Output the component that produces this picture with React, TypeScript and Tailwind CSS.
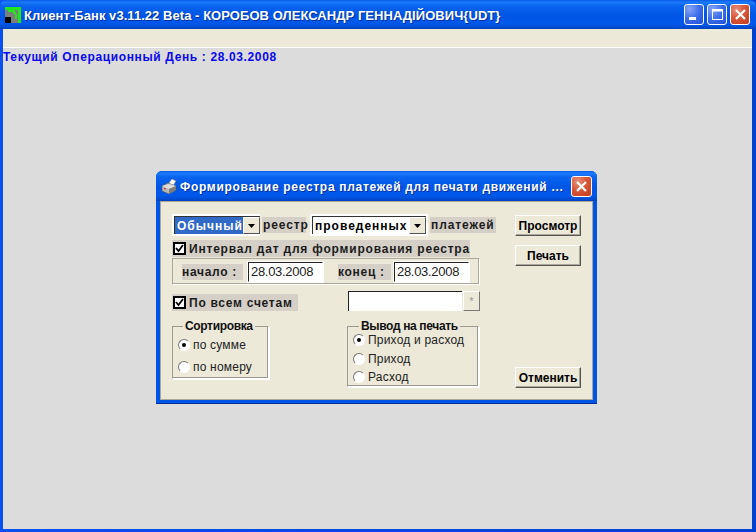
const TITLE = "bg-[linear-gradient(180deg,#0a5ce8_0%,#1a7af8_8%,#0a64ee_20%,#0055e5_55%,#0058ea_80%,#0050d8_92%,#0040b8_100%)]";
const FONT = { fontFamily: '"Liberation Sans", Arial, sans-serif' };

function Control({ kind, size = 21 }: { kind: "min" | "max" | "close"; size?: number }) {
  const bg =
    kind === "close"
      ? "bg-[radial-gradient(circle_at_30%_25%,#e8907a_0%,#d8573a_45%,#c23a1c_100%)]"
      : "bg-[radial-gradient(circle_at_25%_20%,#86a4f5_0%,#3d6de8_50%,#2050d8_100%)]";
  return (
    <div className={`${bg} flex items-center justify-center rounded-[3px] border border-white`} style={{ width: size, height: 21 }}>
      <svg width="13" height="13" viewBox="0 0 13 13">
        {kind === "min" && <rect x="1" y="9" width="7" height="3" fill="#fff" />}
        {kind === "max" && (
          <g fill="none" stroke="#fff">
            <rect x="1.5" y="1.5" width="10" height="10" />
            <rect x="1" y="1" width="11" height="2.5" fill="#fff" stroke="none" />
          </g>
        )}
        {kind === "close" && <path d="M2 2 L11 11 M11 2 L2 11" stroke="#fff" strokeWidth="2.2" />}
      </svg>
    </div>
  );
}

function AppIcon() {
  return (
    <svg width="16" height="16" viewBox="0 0 16 16" shapeRendering="crispEdges">
      <rect width="16" height="16" fill="#22e61e" />
      <rect x="0" y="3" width="13" height="13" fill="#7d7d7d" />
      <rect x="3" y="3" width="7" height="2" fill="#22e61e" />
      <rect x="8" y="5" width="3" height="2" fill="#22e61e" />
      <rect x="10" y="7" width="2" height="5" fill="#22e61e" />
      <rect x="0" y="10" width="6" height="6" fill="#000" />
      <rect x="13" y="3" width="3" height="13" fill="#22e61e" />
    </svg>
  );
}

function PrinterIcon() {
  return (
    <svg width="17" height="17" viewBox="0 0 17 17">
      <path d="M7 6 L11 1 L15 3 L12 8 Z" fill="#fff" stroke="#888" strokeWidth="0.6" />
      <path d="M1 8 L7 5 L15 8 L15 12 L8 16 L1 13 Z" fill="#b8b8b8" stroke="#555" strokeWidth="0.6" />
      <path d="M1 8 L8 11 L15 8 L8 6 Z" fill="#dcdcdc" />
      <path d="M8 11 L8 16 L15 12 L15 8 Z" fill="#7c7c7c" />
      <rect x="3" y="10" width="1.6" height="1.4" fill="#d03030" />
    </svg>
  );
}

function Combo({ width, text, selected }: { width: number; text: string; selected?: boolean }) {
  return (
    <div className="flex h-[22px] shrink-0 items-center border-2 border-white bg-white" style={{ width }}>
      <div className="flex h-[18px] flex-1 items-center border-t border-l border-t-[#333] border-l-[#333] bg-white">
        <span
          className={`${selected ? "bg-[#3169c6] text-white" : "text-black"} flex h-[17px] flex-1 items-center pl-[2px] text-[12px] leading-none font-bold tracking-[1px] whitespace-nowrap`}
        >
          {text}
        </span>
        <div className="flex h-[17px] w-[17px] shrink-0 items-center justify-center border border-t-white border-r-[#555] border-b-[#555] border-l-white bg-[#ece9d8]">
          <svg width="7" height="4" viewBox="0 0 7 4">
            <path d="M0 0 H7 L3.5 4 Z" fill="#000" />
          </svg>
        </div>
      </div>
    </div>
  );
}

function Label({ children, className = "" }: { children: React.ReactNode; className?: string }) {
  return (
    <div className={`flex h-[16px] shrink-0 items-center bg-[#d4d0c8] text-[12px] leading-none font-bold tracking-[0.7px] whitespace-nowrap text-[#1c1c1c] ${className}`}>
      {children}
    </div>
  );
}

function Check() {
  return (
    <div className="flex h-[13px] w-[13px] shrink-0 items-center justify-center border-2 border-black bg-white">
      <svg width="9" height="9" viewBox="0 0 9 9">
        <path d="M1 4 L3.5 7 L8 1" fill="none" stroke="#000" strokeWidth="1.8" />
      </svg>
    </div>
  );
}

function DateInput({ value }: { value: string }) {
  return (
    <div className="flex h-[20px] w-[75px] items-center border-t border-l border-t-[#222] border-r border-b border-r-white border-b-white border-l-[#222] bg-white pl-[2px] text-[13px] font-light tracking-[-0.3px] text-[#222] outline outline-white">
      {value}
    </div>
  );
}

function Radio({ on, label, className = "" }: { on?: boolean; label: string; className?: string }) {
  return (
    <div className={`flex items-center gap-[3px] text-[12px] leading-none text-[#222] ${className}`}>
      <div className="flex h-[12px] w-[12px] items-center justify-center rounded-full border border-t-[#777] border-r-white border-b-white border-l-[#777] bg-white">
        {on && <div className="h-[4px] w-[4px] rounded-full bg-black" />}
      </div>
      <span className="tracking-[0.2px] whitespace-nowrap">{label}</span>
    </div>
  );
}

function Group({ title, className = "", legend = "", children }: { title: string; className?: string; legend?: string; children: React.ReactNode }) {
  return (
    <div className={`relative border border-t-[#9d9b8f] border-r-white border-b-white border-l-[#9d9b8f] shadow-[inset_-1px_-1px_0_#9d9b8f,1px_1px_0_#fff] ${className}`}>
      <span className={`absolute -top-[8px] bg-[#ece9d8] px-[2px] text-[12px] leading-[14px] font-bold tracking-[-0.35px] whitespace-nowrap text-[#111] ${legend}`}>{title}</span>
      {children}
    </div>
  );
}

function Btn({ children, className = "" }: { children: React.ReactNode; className?: string }) {
  return (
    <div className={`flex h-[21px] w-[66px] items-center justify-center border border-t-white border-r-[#555] border-b-[#555] border-l-white bg-[#ece9d8] text-[12px] font-bold text-black shadow-[inset_-1px_-1px_0_#aca899] ${className}`}>
      {children}
    </div>
  );
}

export default function App() {
  return (
    <div className="relative flex h-[532px] w-[756px] flex-col overflow-hidden bg-[linear-gradient(90deg,#0a50f0_0%,#0a50f0_1%,#0040d0_100%)]" style={FONT}>
      {/* main window */}
      <div className={`${TITLE} flex h-[29px] shrink-0 items-center rounded-t-[6px] pr-[6px] pl-[5px]`}>
        <AppIcon />
        <span className="mt-[2px] ml-[3px] flex-1 text-[13px] font-bold tracking-[0.05px] whitespace-nowrap text-white [text-shadow:1px_1px_0_#0030a0]">
          Клиент-Банк v3.11.22 Beta - КОРОБОВ ОЛЕКСАНДР ГЕННАДІЙОВИЧ{"{"}UDT{"}"}
        </span>
        <div className="flex gap-[3px]">
          <Control kind="min" size={20} />
          <Control kind="max" size={20} />
          <Control kind="close" size={20} />
        </div>
      </div>
      <div className="mr-[4px] mb-[3px] ml-[3px] flex flex-1 flex-col">
        <div className="h-[19px] shrink-0 border-b border-b-white bg-[#ece9d8]" />
        <div className="flex-1 bg-[#dcdcdc] text-[12px] leading-[18px] font-bold tracking-[0.63px] text-[#0808f0]">
          Текущий Операционный День : 28.03.2008
        </div>
      </div>

      {/* dialog */}
      <div className="absolute top-[171px] left-[156px] flex h-[233px] w-[441px] flex-col rounded-t-[6px] bg-[#0055e5] shadow-[inset_0_-1px_0_#0030a0]">
        <div className={`${TITLE} flex h-[30px] shrink-0 items-center rounded-t-[6px] pr-[5px] pl-[5px]`}>
          <PrinterIcon />
          <span className="mt-[2px] ml-[2px] flex-1 text-[12px] font-bold tracking-[0.7px] whitespace-nowrap text-white [text-shadow:1px_1px_0_#0030a0]">
            Формирование реестра платежей для печати движений ...
          </span>
          <Control kind="close" size={21} />
        </div>
        <div className="mx-[4px] mb-[4px] flex flex-1 border border-[#aca899] bg-[#ece9d8] pt-[12px] pl-[11px] text-black">
          <div className="flex w-[324px] flex-col">
            <div className="flex h-[22px] items-center">
              <Combo width={88} text="Обычный" selected />
              <Label className="ml-[2px] w-[44px] pl-[1px] tracking-[0.9px]">реестр</Label>
              <div className="ml-[4px]">
                <Combo width={118} text="проведенных" />
              </div>
              <Label className="ml-[2px] w-[66px] pl-[1px] tracking-[0.9px]">платежей</Label>
            </div>

            <div className="mt-[4px] flex h-[17px] w-[298px] items-center gap-[3px] bg-[#d4d0c8] pl-[1px]">
              <Check />
              <span className="text-[12px] leading-none font-bold tracking-[0.8px] whitespace-nowrap text-[#1c1c1c]">Интервал дат для формирования реестра</span>
            </div>

            <div className="mt-[1px] flex h-[27px] w-[308px] items-center border border-t-[#aca899] border-r-white border-b-white border-l-[#aca899] pl-[9px] shadow-[inset_-1px_-1px_0_#aca899]">
              <Label className="w-[61px]">начало :</Label>
              <div className="ml-[5px]">
                <DateInput value="28.03.2008" />
              </div>
              <Label className="ml-[15px] w-[53px]">конец :</Label>
              <div className="ml-[3px]">
                <DateInput value="28.03.2008" />
              </div>
            </div>

            <div className="mt-[6px] flex h-[20px] w-[308px] items-end">
              <div className="flex h-[17px] w-[126px] items-center gap-[3px] bg-[#d4d0c8] pl-[1px]">
                <Check />
                <span className="text-[12px] leading-none font-bold tracking-[0.75px] whitespace-nowrap text-[#1c1c1c]">По всем счетам</span>
              </div>
              <div className="ml-[50px] h-[20px] w-[114px] border-t border-l border-t-[#222] border-l-[#222] bg-white" />
              <div className="ml-[1px] flex h-[20px] w-[17px] items-center justify-center border border-t-white border-r-[#777] border-b-[#777] border-l-white text-[11px] text-[#999]">
                *
              </div>
            </div>

            <div className="mt-[15px] flex items-start">
              <Group title="Сортировка" className="h-[53px] w-[97px] pt-[12px] pl-[5px]" legend="left-[10px]">
                <Radio on label="по сумме" />
                <Radio label="по номеру" className="mt-[10px]" />
              </Group>
              <Group title="Вывод на печать" className="ml-[78px] h-[61px] w-[132px] pt-[7px] pl-[5px]" legend="left-[11px]">
                <Radio on label="Приход и расход" />
                <Radio label="Приход" className="mt-[7px]" />
                <Radio label="Расход" className="mt-[6px]" />
              </Group>
            </div>
          </div>

          <div className="ml-[19px] flex flex-col pt-[1px]">
            <Btn>Просмотр</Btn>
            <Btn className="mt-[9px]">Печать</Btn>
            <Btn className="mt-[101px]">Отменить</Btn>
          </div>
        </div>
      </div>
    </div>
  );
}
